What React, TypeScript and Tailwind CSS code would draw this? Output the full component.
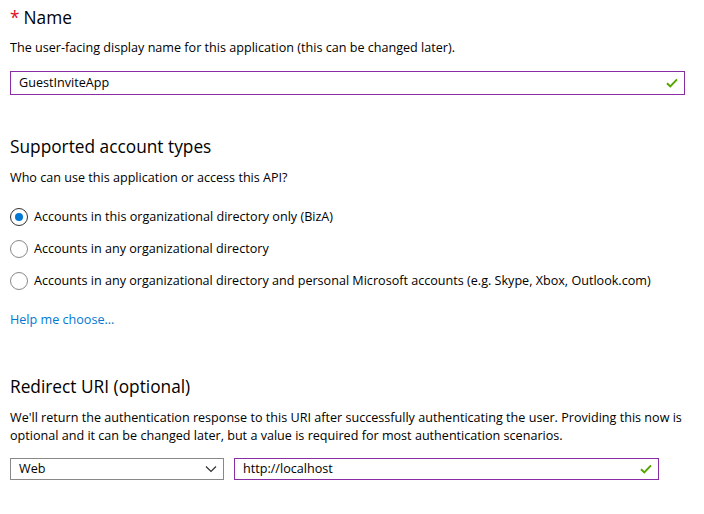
import React, { useState } from 'react';

const font = { fontFamily: '"Open Sans", "Noto Sans", sans-serif' };

const Check: React.FC = () => (
  <svg width="12" height="10" viewBox="0 0 12 10" className="shrink-0">
    <path d="M1 5.2 L4.3 8.4 L11 1.4" fill="none" stroke="#57a300" strokeWidth="2" />
  </svg>
);

const Radio: React.FC<{ checked: boolean; label: string; onClick: () => void }> = ({ checked, label, onClick }) => (
  <label className="flex items-center gap-[6px] h-[20px] cursor-pointer" onClick={onClick}>
    <span
      className={`w-[18px] h-[18px] rounded-full border flex items-center justify-center ${
        checked ? 'border-[#323130]' : 'border-[#8a8886]'
      }`}
    >
      {checked && <span className="w-[8px] h-[8px] rounded-full bg-[#0078d4]" />}
    </span>
    <span className="text-[12.6px] text-[#000]">{label}</span>
  </label>
);

const OPTIONS = [
  'Accounts in this organizational directory only (BizA)',
  'Accounts in any organizational directory',
  'Accounts in any organizational directory and personal Microsoft accounts (e.g. Skype, Xbox, Outlook.com)',
];

export default function App() {
  const [selected, setSelected] = useState(0);

  return (
    <div className="w-[704px] h-[514px] bg-white text-black overflow-hidden" style={font}>
      <div className="pl-[10px] pt-[6px]">
        <h2 className="text-[17.3px] leading-[24px] font-normal">
          <span className="text-[#e00b1c] mr-[4px]">*</span>Name
        </h2>
        <p className="text-[12.6px] leading-[18px] mt-[9px]">
          The user-facing display name for this application (this can be changed later).
        </p>
        <div className="mt-[14px] w-[675px] h-[24px] border border-[#8a2da5] flex items-center justify-between pl-[8px] pr-[6px]">
          <span className="text-[12.6px]">GuestInviteApp</span>
          <Check />
        </div>

        <h2 className="text-[17.3px] leading-[24px] font-normal mt-[40px]">Supported account types</h2>
        <p className="text-[12.6px] leading-[18px] mt-[10px]">Who can use this application or access this API?</p>
        <div className="mt-[20px] flex flex-col gap-[12px]">
          {OPTIONS.map((o, i) => (
            <Radio key={o} checked={selected === i} label={o} onClick={() => setSelected(i)} />
          ))}
        </div>
        <a href="#" className="block mt-[20px] text-[12.6px] leading-[18px] text-[#0078d4]">
          Help me choose...
        </a>

        <h2 className="text-[17.3px] leading-[24px] font-normal mt-[46px]">Redirect URI (optional)</h2>
        <p className="text-[12.6px] leading-[18px] mt-[10px] w-[680px]">
          We'll return the authentication response to this URI after successfully authenticating the user. Providing
          this now is optional and it can be changed later, but a value is required for most authentication scenarios.
        </p>
        <div className="mt-[13px] flex gap-[10px]">
          <div className="w-[214px] h-[22px] border border-[#8a8886] flex items-center justify-between pl-[8px] pr-[6px]">
            <span className="text-[12.6px]">Web</span>
            <svg width="12" height="8" viewBox="0 0 12 8">
              <path d="M1 1.5 L6 6.5 L11 1.5" fill="none" stroke="#323130" strokeWidth="1.2" />
            </svg>
          </div>
          <div className="w-[425px] h-[22px] border border-[#8a2da5] flex items-center justify-between pl-[8px] pr-[6px]">
            <span className="text-[12.6px]">http://localhost</span>
            <Check />
          </div>
        </div>
      </div>
    </div>
  );
}
